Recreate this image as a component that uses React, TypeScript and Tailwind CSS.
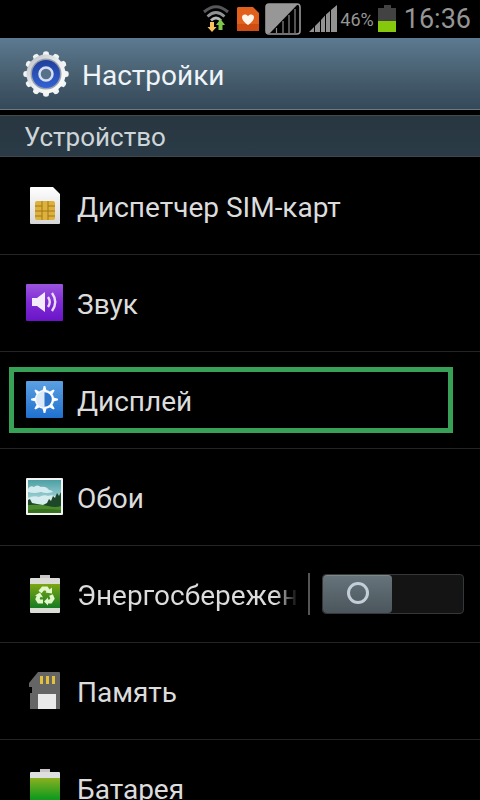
import { useState } from 'react';
import type { ReactNode } from 'react';

function WifiIcon() {
  return (
    <svg viewBox="0 0 26 28" className="h-[28px] w-[26px]" fill="none">
      <path d="M1 7Q13 -3.500 25 7" stroke="#55575a" strokeWidth="3" />
      <path d="M4.500 11.500Q13 3.500 21.500 11.500" stroke="#8f9194" strokeWidth="2.800" />
      <path d="M8 15.500Q13 10.500 18 15.500" stroke="#b4b6b8" strokeWidth="2.600" />
      <path d="M7 17h4v5h2.500L9 27l-4.500-5H7z" fill="#f8c35c" />
      <path d="M15.500 25h4v-5H22L17.500 14 13 20h2.500z" fill="#80c648" />
    </svg>
  );
}

function HeartCardIcon() {
  return (
    <svg viewBox="0 0 22 26" className="h-[26px] w-[22px]">
      <path d="M1 1h15l6 6v18H0V2z" fill="#e0601c" />
      <path d="M0 18h22v7H0z" fill="#cf4c12" />
      <path d="M11 19C7.500 16.500 5 14 5 11.200C5 8 9.500 7.500 11 10.200C12.500 7.500 17 8 17 11.200C17 14 14.500 16.500 11 19z" fill="#fff5ea" />
    </svg>
  );
}

function NoSimIcon() {
  return (
    <svg viewBox="0 0 36 32" className="h-[32px] w-[36px]">
      <rect x="1" y="1" width="34" height="30" rx="3" fill="#000" />
      <path d="M11.500 25v5M18 18v12M24 12v18M30 6v24" stroke="#8a8a8a" strokeWidth="1.200" />
      <path d="M1 4Q1 1 4 1H33L5 30H4Q1 30 1 28z" fill="#979797" />
      <rect x="1" y="1" width="34" height="30" rx="3" fill="none" stroke="#999" strokeWidth="1.600" />
    </svg>
  );
}

function SignalIcon() {
  return (
    <svg viewBox="0 0 28 28" className="h-[28px] w-[28px]" fill="#929292">
      <path d="M0 27L5 22V27zM6 21L11 16V27H6zM12 15L16 10.500V27H12zM17 9.500L21 6V27H17zM22 5L28 0V27H22z" />
    </svg>
  );
}

function StatusBatteryIcon() {
  return (
    <svg viewBox="0 0 18 28" className="h-[28px] w-[18px]">
      <path d="M6 0h7v3h5v13H0V3h6z" fill="#424242" />
      <path d="M0 16h18v11H0z" fill="#86c90c" />
    </svg>
  );
}

function GearIcon() {
  const teeth = [0, 30, 60, 90, 120, 150, 180, 210, 240, 270, 300, 330];
  return (
    <svg viewBox="0 0 46 48" className="h-[48px] w-[46px]">
      <defs>
        <linearGradient id="gearRim" x1="0" y1="0" x2="1" y2="1">
          <stop offset="0" stopColor="#b9bec3" />
          <stop offset=".5" stopColor="#eceeef" />
          <stop offset="1" stopColor="#fff" />
        </linearGradient>
        <linearGradient id="gearBlue" x1="0" y1="0" x2="0" y2="1">
          <stop offset="0" stopColor="#213f9b" />
          <stop offset="1" stopColor="#3262d4" />
        </linearGradient>
      </defs>
      {teeth.map((angle) => (
        <path
          key={angle}
          d="M19.500 6L20.500 2Q23 0.500 25.500 2L26.500 6z"
          fill="#f1f3f4"
          transform={`rotate(${angle} 23 24)`}
        />
      ))}
      <circle cx="23" cy="24" r="19.500" fill="url(#gearRim)" />
      <circle cx="23" cy="24" r="15.500" fill="#98a1ab" />
      <circle cx="23" cy="24" r="14" fill="url(#gearBlue)" />
      <circle cx="23" cy="24" r="6.500" fill="#57718a" stroke="#d5def2" strokeWidth="2.500" />
    </svg>
  );
}

function SimIcon() {
  return (
    <svg viewBox="0 0 38 38" className="size-[38px]">
      <defs>
        <linearGradient id="simPaper" x1="0" y1="0" x2="0" y2="1">
          <stop offset="0" stopColor="#fff" />
          <stop offset="1" stopColor="#d6d6d6" />
        </linearGradient>
      </defs>
      <path d="M5 0H27L34 7V36Q34 37 33 37H5Q4 37 4 36V1Q4 0 5 0z" fill="url(#simPaper)" />
      <rect x="9" y="14" width="20" height="19" rx="2" fill="#dcb13c" />
      <path
        d="M9 19h7M22 19h7M9 24h20M9 29h7M22 29h7M16 14v19M22 14v19"
        stroke="#a3761b"
        strokeWidth="1"
        fill="none"
      />
    </svg>
  );
}

function SoundIcon() {
  return (
    <svg viewBox="0 0 38 38" className="size-[38px]">
      <defs>
        <linearGradient id="soundBg" x1="0" y1="0" x2="0" y2="1">
          <stop offset="0" stopColor="#9a55de" />
          <stop offset=".5" stopColor="#7f2bd4" />
          <stop offset="1" stopColor="#6a14c8" />
        </linearGradient>
      </defs>
      <rect width="37" height="37" rx="1" fill="url(#soundBg)" />
      <path d="M6 14h5l8-6v20l-8-6H6z" fill="#f4ecfb" />
      <path d="M22 13Q25.500 18 22 23M26 9Q32.500 18 26 27" stroke="#eadcf8" strokeWidth="2.400" fill="none" />
    </svg>
  );
}

function DisplayIcon() {
  const rays = [0, 45, 90, 135, 180, 225, 270, 315];
  return (
    <svg viewBox="0 0 38 38" className="size-[38px]">
      <defs>
        <linearGradient id="displayBg" x1="0" y1="0" x2="0" y2="1">
          <stop offset="0" stopColor="#5ba0e2" />
          <stop offset="1" stopColor="#1f70cf" />
        </linearGradient>
      </defs>
      <rect width="37" height="37" rx="1" fill="url(#displayBg)" />
      {rays.map((angle) => (
        <path key={angle} d="M16.500 9.500L17.700 5H19.300L20.500 9.500z" fill="#fff" transform={`rotate(${angle} 18.500 18.500)`} />
      ))}
      <circle cx="18.500" cy="18.500" r="8.500" fill="#2d78cc" stroke="#fff" strokeWidth="2.400" />
      <path d="M18.500 10A8.500 8.500 0 0 0 18.500 27z" fill="#dceaf8" />
    </svg>
  );
}

function WallpaperIcon() {
  return (
    <svg viewBox="0 0 38 38" className="size-[38px]">
      <defs>
        <linearGradient id="skyBg" x1="0" y1="0" x2="0" y2="1">
          <stop offset="0" stopColor="#4ba0a4" />
          <stop offset=".7" stopColor="#b4dce2" />
        </linearGradient>
      </defs>
      <rect width="37" height="37" rx="1" fill="#f2f4f2" />
      <rect x="2" y="2" width="33" height="33" fill="url(#skyBg)" />
      <path d="M2 11Q4 7 8 9Q11 6 15 9Q20 8 23 12Q26 12 27 14Q20 16 15 14Q8 16 2 14z" fill="#d3ebee" />
      <path d="M2 20Q8 17 13 19Q18 16 22 18Q28 16 31 20V28H2z" fill="#d6ecef" />
      <path d="M2 22L4 21L6 25L11 26L17 27L21 25L23 21L25 23L27 18L29 20L31 15L33 18L35 14V30H2z" fill="#1d4728" />
      <path d="M2 27Q14 26 22 28T35 28V35H2z" fill="#4b8a2c" />
      <path d="M2 32Q18 30 35 32V35H2z" fill="#37701f" />
    </svg>
  );
}

function RecycleBatteryIcon() {
  return (
    <svg viewBox="0 0 38 38" className="size-[38px]">
      <defs>
        <linearGradient id="ecoFill" x1="0" y1="0" x2="0" y2="1">
          <stop offset="0" stopColor="#7da614" />
          <stop offset="1" stopColor="#167b22" />
        </linearGradient>
      </defs>
      <path d="M14 0h10v4h-10z" fill="#c9c5c9" />
      <rect x="4" y="3" width="30" height="35" rx="1" fill="#dcdcd6" />
      <rect x="4" y="9" width="30" height="24" fill="url(#ecoFill)" />
      <g fill="none" stroke="#e2f7cc" strokeWidth="4">
        <path d="M14 17L17 13.500H20.500L22.500 16.500" />
        <path d="M25 20L26.500 23.500L24.500 26.500H21" />
        <path d="M17 26.500H13L11.500 24L13 20.500" />
      </g>
      <g fill="#e2f7cc">
        <path d="M19.500 17.500L26 18.500L26 12.500z" />
        <path d="M22 22.500L18 26.500L22 30.500z" />
        <path d="M9 20.500L14 17.500L17 22.500z" />
      </g>
    </svg>
  );
}

function MemoryIcon() {
  return (
    <svg viewBox="0 0 38 38" className="size-[38px]">
      <path d="M12 0H33Q34 0 34 1V37H4V21H6V15H3V11z" fill="#656565" />
      <path d="M14 4h3v8h-3zM20 4h3v8h-3zM26 4h3v8h-3z" fill="#e3c13c" />
      <rect x="12" y="22" width="18" height="15" fill="#e9e9e9" />
    </svg>
  );
}

function BatteryIcon() {
  return (
    <svg viewBox="0 0 38 38" className="size-[38px]">
      <defs>
        <linearGradient id="batteryFill" x1="0" y1="0" x2="0" y2="1">
          <stop offset="0" stopColor="#8ab021" />
          <stop offset=".8" stopColor="#0e9a1c" />
        </linearGradient>
      </defs>
      <path d="M14 0h10v4h-10z" fill="#c9c5c9" />
      <rect x="4" y="3" width="30" height="35" rx="1" fill="#dedede" />
      <rect x="4" y="9" width="30" height="26" fill="url(#batteryFill)" />
    </svg>
  );
}

function PowerSwitch() {
  const [on, setOn] = useState(false);
  return (
    <label className="ml-3 block h-10 w-[142px] shrink-0 cursor-pointer rounded-[4px] border border-[#353838] bg-[#141414]">
      <input
        type="checkbox"
        role="switch"
        aria-label="Энергосбережение"
        className="peer sr-only"
        checked={on}
        onChange={() => setOn(!on)}
      />
      <span className="flex h-full w-[69px] items-center justify-center rounded-[4px] border-t border-[#7d878c] bg-linear-to-b from-[#66737a] to-[#4a565c] pb-1 peer-checked:ml-auto">
        <span className="size-[22px] rounded-full border-[3px] border-[#c3ced8]" />
      </span>
    </label>
  );
}

type Item = {
  label: string;
  icon: ReactNode;
  highlighted?: boolean;
  hasSwitch?: boolean;
};

const items: Item[] = [
  { label: 'Диспетчер SIM-карт', icon: <SimIcon /> },
  { label: 'Звук', icon: <SoundIcon /> },
  { label: 'Дисплей', icon: <DisplayIcon />, highlighted: true },
  { label: 'Обои', icon: <WallpaperIcon /> },
  { label: 'Энергосбережение', icon: <RecycleBatteryIcon />, hasSwitch: true },
  { label: 'Память', icon: <MemoryIcon /> },
  { label: 'Батарея', icon: <BatteryIcon /> },
];

function SettingsRow({ label, icon, highlighted, hasSwitch }: Item) {
  return (
    <li className="relative flex h-[97px] items-center border-b border-[#242424] pr-4">
      <button type="button" className="flex h-full min-w-0 flex-1 items-center gap-[13px] pl-[26px] text-left">
        <span className="shrink-0">{icon}</span>
        {hasSwitch ? (
          <span className="min-w-0 flex-1 overflow-hidden bg-linear-to-r from-[#dcdcdc] from-90% to-transparent bg-clip-text pt-1 whitespace-nowrap text-transparent">
            {label}
          </span>
        ) : (
          <span className="truncate pt-1">{label}</span>
        )}
      </button>
      {hasSwitch && (
        <>
          <span className="ml-2.5 h-[42px] w-[2px] shrink-0 bg-[#555]" />
          <PowerSwitch />
        </>
      )}
      {highlighted && (
        <span className="pointer-events-none absolute top-[15px] right-[27px] bottom-[15px] left-[9px] border-[5px] border-[#37a257]" />
      )}
    </li>
  );
}

export default function App() {
  return (
    <div className="flex h-screen flex-col overflow-hidden bg-black font-[Roboto,sans-serif] text-[28px] text-[#dcdcdc]">
      <header className="shrink-0">
        <div className="flex h-[38px] items-center justify-end pr-[9px] text-[#959595]">
          <WifiIcon />
          <span className="ml-2">
            <HeartCardIcon />
          </span>
          <span className="ml-[6px]">
            <NoSimIcon />
          </span>
          <span className="ml-2">
            <SignalIcon />
          </span>
          <span className="ml-[3px] text-[18px]">46%</span>
          <span className="ml-1">
            <StatusBatteryIcon />
          </span>
          <time className="ml-2 text-[27px]">16:36</time>
        </div>
        <div className="flex h-[72px] items-center gap-[13px] border-b border-[#6c7a80] bg-linear-to-b from-[#5c7a91] via-[#496071] to-[#34495a] pl-[23px]">
          <GearIcon />
          <h1 className="pt-1 text-[#eef4f8]">Настройки</h1>
        </div>
      </header>
      <main>
        <h2 className="mt-[5px] flex h-[42px] items-center border-t border-b border-t-[#46494a] border-b-[#3f484d] bg-linear-to-b from-[#283640] to-[#2a3b47] pt-[2px] pl-6 text-[26px] text-[#ced5d8]">
          Устройство
        </h2>
        <ul className="mt-px">
          {items.map((item) => (
            <SettingsRow key={item.label} {...item} />
          ))}
        </ul>
      </main>
    </div>
  );
}
